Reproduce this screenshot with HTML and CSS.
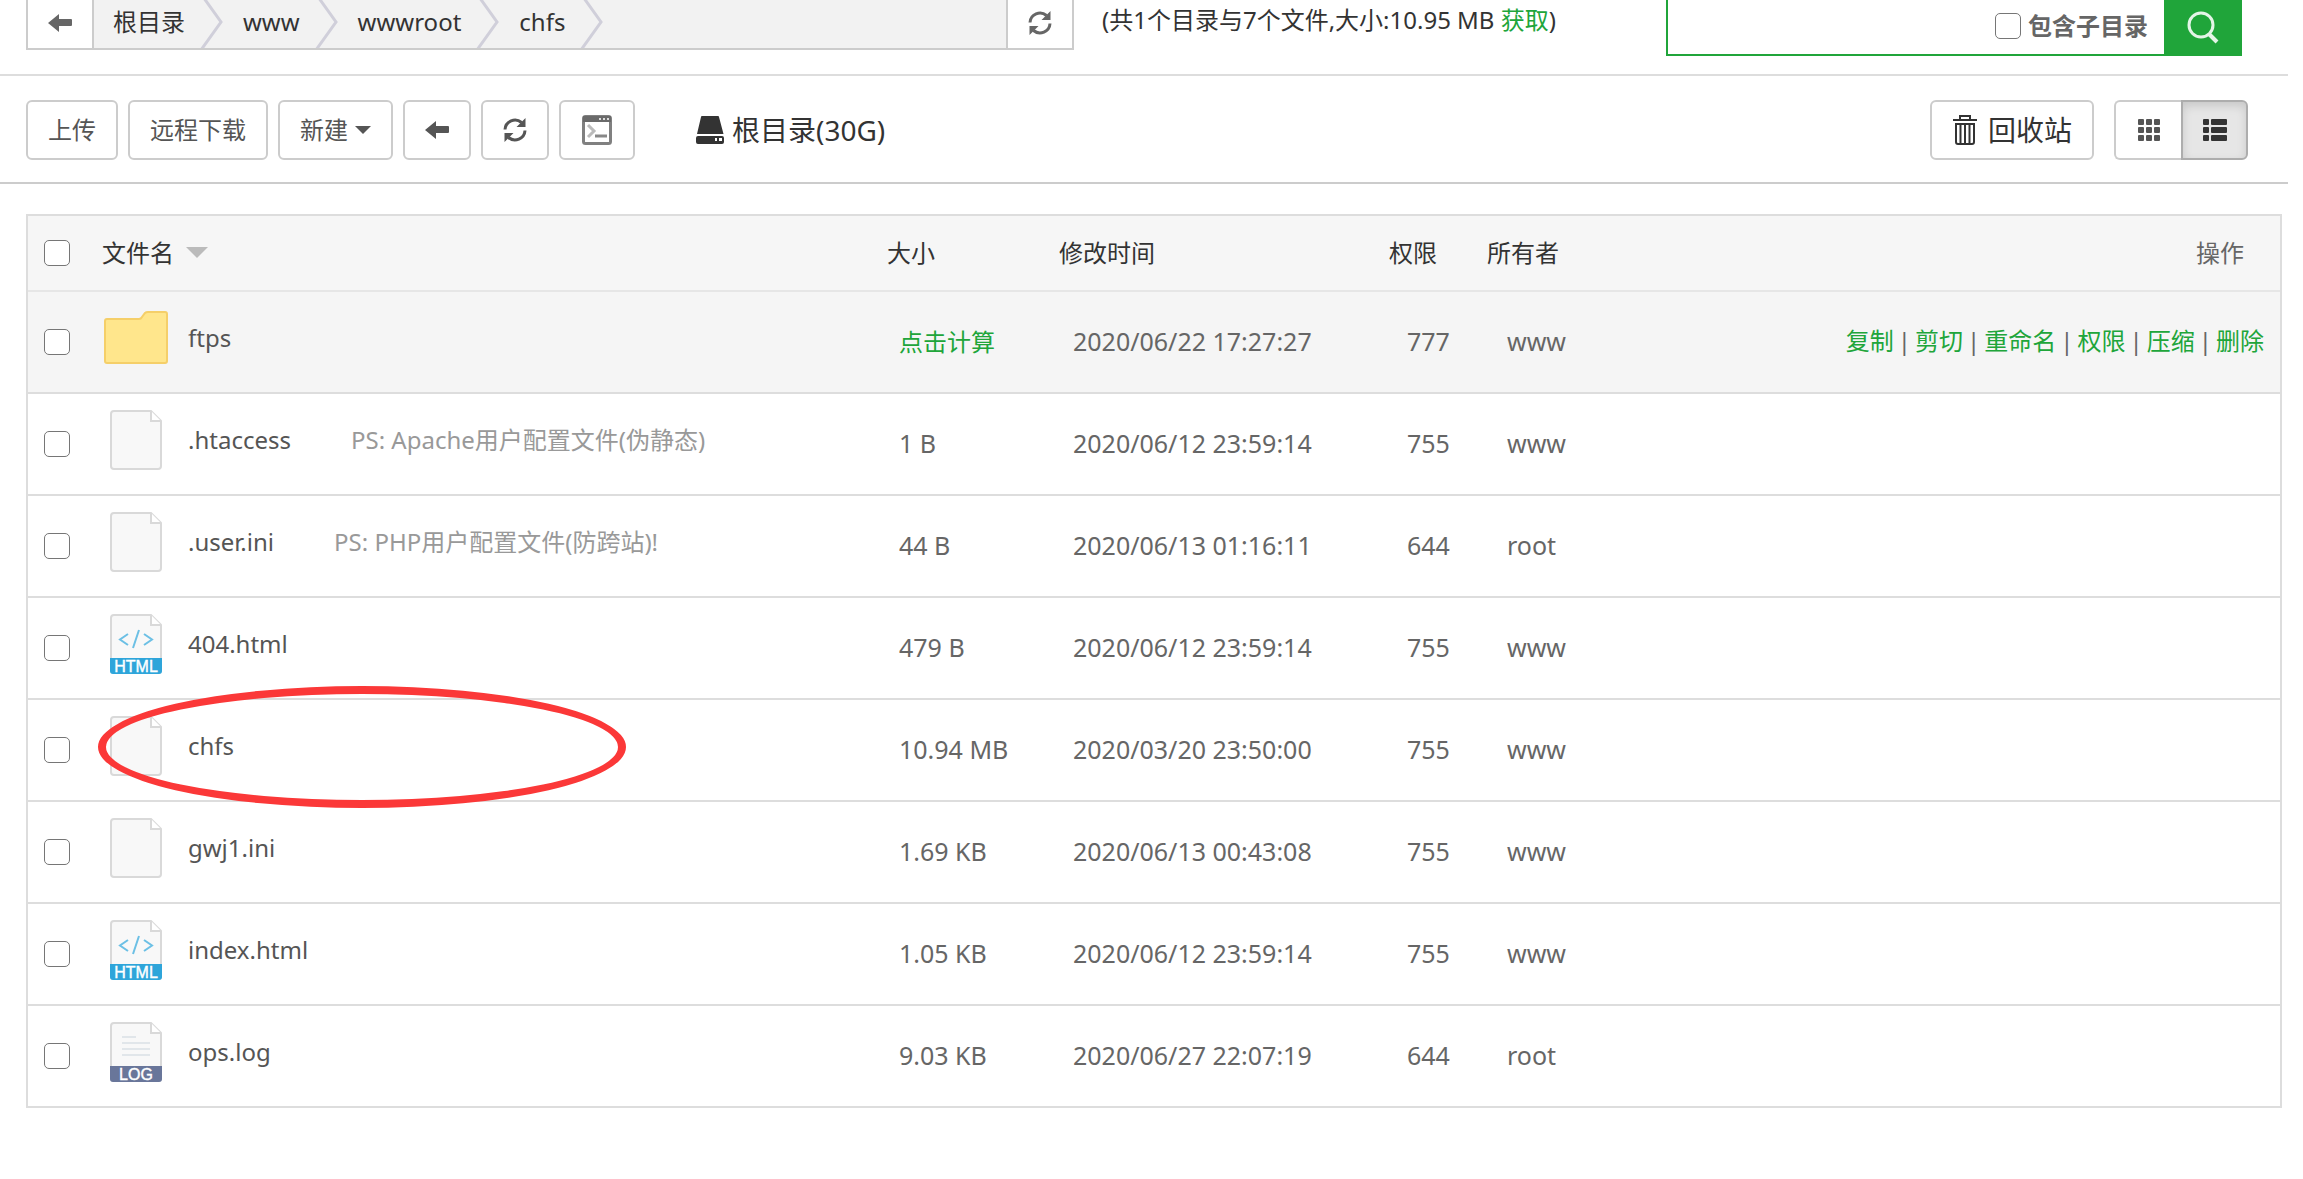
FILE: index.html
```html
<!DOCTYPE html>
<html lang="zh-CN">
<head>
<meta charset="utf-8">
<title>文件管理</title>
<link rel="stylesheet" href="styles.css">
</head>
<body>
<svg class="defs" aria-hidden="true">
  <symbol id="arrow" viewBox="0 0 24 24"><path d="M0 12 11 3V8H23q1 0 1 1v5q0 1-1 1H11v6z" fill="currentColor"/></symbol>
  <symbol id="refresh" viewBox="0 0 24 24"><path d="M2 11.500A10 10 0 0 1 18.500 4.500M22 12.500A10 10 0 0 1 5.500 19.500" fill="none" stroke="currentColor" stroke-width="3"/><path d="M22.500 0V9H13.500zM1.500 24V15h9z" fill="currentColor"/></symbol>
  <symbol id="chevron" viewBox="0 0 24 48"><path d="M1-6 21 22 1 50" fill="none" stroke="#d0cfda" stroke-width="3"/></symbol>
  <symbol id="doc" viewBox="0 0 52 60"><path d="M4 1H41L51 11V56q0 3-3 3H4q-3 0-3-3V4q0-3 3-3z" fill="#f8f8f8" stroke="#d9d9d9" stroke-width="2"/><path d="M41 1V11H51" fill="#fff" stroke="#d9d9d9" stroke-width="2"/></symbol>
</svg>
<div class="page">
  <header class="top">
    <nav class="path">
      <button class="path-btn" aria-label="返回"><svg class="ico"><use href="#arrow"/></svg></button>
      <div class="crumbs">
        <a href="#">根目录</a><svg class="chev"><use href="#chevron"/></svg>
        <a href="#">www</a><svg class="chev"><use href="#chevron"/></svg>
        <a href="#">wwwroot</a><svg class="chev"><use href="#chevron"/></svg>
        <a href="#">chfs</a><svg class="chev"><use href="#chevron"/></svg>
      </div>
      <button class="path-btn" aria-label="刷新"><svg class="ico"><use href="#refresh"/></svg></button>
    </nav>
    <p class="info">(共1个目录与7个文件,大小:10.95 MB <a href="#">获取</a>)</p>
    <form class="search">
      <input class="search-text" type="text" aria-label="搜索">
      <label class="sub"><input type="checkbox" class="check">包含子目录</label>
      <button class="search-btn" type="button" aria-label="搜索"><svg width="34" height="34" viewBox="0 0 34 34" fill="none" stroke="#e4f5e7" stroke-width="3"><circle cx="15" cy="15" r="12"/><path d="M23 24 31 32" stroke-width="4"/></svg></button>
    </form>
  </header>
  <div class="tools">
    <button class="btn">上传</button>
    <button class="btn">远程下载</button>
    <button class="btn">新建<span class="caret"></span></button>
    <button class="btn" aria-label="返回"><svg class="ico"><use href="#arrow"/></svg></button>
    <button class="btn" aria-label="刷新"><svg class="ico"><use href="#refresh"/></svg></button>
    <button class="btn" aria-label="终端"><svg width="32" height="32" viewBox="0 0 32 32"><rect x="2.500" y="2.500" width="27" height="27" rx="2" fill="#fff" stroke="#808080" stroke-width="3"/><path d="M2 2H30V8H2z" fill="#6a6a6a"/><path d="M18 5h2m2 0h2m2 0h2" stroke="#ddd" stroke-width="2"/><path d="M7 11 13 17 7 23" fill="none" stroke="#bbb" stroke-width="3"/><path d="M14 22H26" stroke="#888" stroke-width="3"/></svg></button>
    <span class="disk"><svg width="28" height="30" viewBox="0 0 28 30" fill="#333"><path d="M6 1H22q1 0 1 1L27.500 19H1L5 2q0-1 1-1z"/><path fill-rule="evenodd" d="M2 21H26q2 0 2 2v4q0 2-2 2H2q-2 0-2-2V23q0-2 2-2zM19 23v3h2V23zm4 0v3h3V23z"/></svg>根目录(30G)</span>
    <button class="btn trash"><svg width="26" height="32" viewBox="0 0 26 32" fill="none" stroke="#333" stroke-width="2"><path d="M1 6H25" stroke-width="2"/><path d="M8 5V2H18V5M4 10V28q0 2 2 2H20q2 0 2-2V10zM8.500 10V29M13 10V29M17.500 10V29"/></svg>回收站</button>
    <div class="group">
      <button class="btn" aria-label="图标"><svg width="22" height="22" viewBox="0 0 22 22" fill="#555"><g id="r"><rect width="6" height="6" rx="1"/><rect x="8" width="6" height="6" rx="1"/><rect x="16" width="6" height="6" rx="1"/></g><use href="#r" y="8"/><use href="#r" y="16"/></svg></button>
      <button class="btn on" aria-label="列表"><svg width="24" height="22" viewBox="0 0 24 22" fill="#333"><g id="l"><rect width="6" height="6" rx="1"/><rect x="8" width="16" height="6" rx="1"/></g><use href="#l" y="8"/><use href="#l" y="16"/></svg></button>
    </div>
  </div>
  <main class="files">
    <table>
      <colgroup><col class="c-check"><col class="c-name"><col class="c-size"><col class="c-date"><col class="c-perm"><col class="c-owner"><col></colgroup>
      <thead>
        <tr><th><input type="checkbox" class="check" aria-label="全选"></th><th>文件名<span class="sort"></span></th><th>大小</th><th>修改时间</th><th>权限</th><th>所有者</th><th class="op">操作</th></tr>
      </thead>
      <tbody>
        <tr class="hover"><td><input type="checkbox" class="check" aria-label="ftps"></td><td><div class="name"><svg class="ficon" viewBox="0 0 64 60"><path d="M3 11H35q2 0 3-2L41 5q1-1 3-1H61q2 0 2 2V53q0 2-2 2H3q-2 0-2-2V13q0-2 2-2z" fill="#ffe68c" stroke="#f5cf69" stroke-width="2"/></svg><a href="#">ftps</a></div></td><td><a class="link" href="#">点击计算</a></td><td>2020/06/22 17:27:27</td><td>777</td><td>www</td><td><div class="acts"><a href="#">复制</a><span>|</span><a href="#">剪切</a><span>|</span><a href="#">重命名</a><span>|</span><a href="#">权限</a><span>|</span><a href="#">压缩</a><span>|</span><a href="#">删除</a></div></td></tr>
        <tr><td><input type="checkbox" class="check" aria-label=".htaccess"></td><td><div class="name"><svg class="ficon" viewBox="-6 0 64 60"><use href="#doc" width="52" height="60"/></svg><a href="#">.htaccess</a><span class="ps">PS: Apache用户配置文件(伪静态)</span></div></td><td>1 B</td><td>2020/06/12 23:59:14</td><td>755</td><td>www</td><td></td></tr>
        <tr><td><input type="checkbox" class="check" aria-label=".user.ini"></td><td><div class="name"><svg class="ficon" viewBox="-6 0 64 60"><use href="#doc" width="52" height="60"/></svg><a href="#">.user.ini</a><span class="ps">PS: PHP用户配置文件(防跨站)!</span></div></td><td>44 B</td><td>2020/06/13 01:16:11</td><td>644</td><td>root</td><td></td></tr>
        <tr><td><input type="checkbox" class="check" aria-label="404.html"></td><td><div class="name"><svg class="ficon" viewBox="-6 0 64 60"><use href="#doc" width="52" height="60"/><path d="M18 20 10 25.500 18 31M34 20 42 25.500 34 31M29 16 23 34" fill="none" stroke="#6cc0e5" stroke-width="2"/><path d="M0 44H52V57q0 3-3 3H3q-3 0-3-3z" fill="#2ea5da"/><text class="tag" x="26" y="58">HTML</text></svg><a href="#">404.html</a></div></td><td>479 B</td><td>2020/06/12 23:59:14</td><td>755</td><td>www</td><td></td></tr>
        <tr><td><input type="checkbox" class="check" aria-label="chfs"></td><td class="marked"><div class="name"><svg class="ficon" viewBox="-6 0 64 60"><use href="#doc" width="52" height="60"/></svg><a href="#">chfs</a></div><span class="ring"></span></td><td>10.94 MB</td><td>2020/03/20 23:50:00</td><td>755</td><td>www</td><td></td></tr>
        <tr><td><input type="checkbox" class="check" aria-label="gwj1.ini"></td><td><div class="name"><svg class="ficon" viewBox="-6 0 64 60"><use href="#doc" width="52" height="60"/></svg><a href="#">gwj1.ini</a></div></td><td>1.69 KB</td><td>2020/06/13 00:43:08</td><td>755</td><td>www</td><td></td></tr>
        <tr><td><input type="checkbox" class="check" aria-label="index.html"></td><td><div class="name"><svg class="ficon" viewBox="-6 0 64 60"><use href="#doc" width="52" height="60"/><path d="M18 20 10 25.500 18 31M34 20 42 25.500 34 31M29 16 23 34" fill="none" stroke="#6cc0e5" stroke-width="2"/><path d="M0 44H52V57q0 3-3 3H3q-3 0-3-3z" fill="#2ea5da"/><text class="tag" x="26" y="58">HTML</text></svg><a href="#">index.html</a></div></td><td>1.05 KB</td><td>2020/06/12 23:59:14</td><td>755</td><td>www</td><td></td></tr>
        <tr><td><input type="checkbox" class="check" aria-label="ops.log"></td><td><div class="name"><svg class="ficon" viewBox="-6 0 64 60"><use href="#doc" width="52" height="60"/><path d="M12 15H26M12 21H40M12 27H40M12 33H40" stroke="#e1e6ea" stroke-width="2"/><path d="M0 44H52V57q0 3-3 3H3q-3 0-3-3z" fill="#69769a"/><text class="tag" x="26" y="58">LOG</text></svg><a href="#">ops.log</a></div></td><td>9.03 KB</td><td>2020/06/27 22:07:19</td><td>644</td><td>root</td><td></td></tr>
      </tbody>
    </table>
  </main>
</div>
</body>
</html>
```

FILE: styles.css
```css
* { box-sizing: border-box; }
body {
  margin: 0;
  background: #fff;
  color: #666;
  font: 24px/34px "Noto Sans", "Noto Sans CJK SC", sans-serif;
}
button, input { font: inherit; color: inherit; margin: 0; }
button { cursor: pointer; }
a { color: inherit; text-decoration: none; }
svg { display: block; flex: none; }
.defs { position: absolute; width: 0; height: 0; }
.page { margin-right: 15px; }
.ico { width: 24px; height: 24px; }

.top {
  display: flex;
  align-items: flex-start;
  height: 76px;
  padding: 0 46px 0 26px;
  border-bottom: 2px solid #ddd;
}
.path {
  display: flex;
  flex: 0 1 1048px;
  height: 50px;
  border: 2px solid #ccc;
  border-top: 0;
}
.path-btn {
  display: flex;
  align-items: center;
  justify-content: center;
  width: 64px;
  padding: 0 0 2px;
  border: 0;
  background: #fff;
  color: #666;
}
.crumbs {
  display: flex;
  flex: 1;
  overflow: hidden;
  background: #f2f2f2;
  border: solid #ccc;
  border-width: 0 2px;
  color: #333;
  line-height: 44px;
}
.crumbs a { padding: 0 15px 0 19px; }
.chev { width: 24px; height: 48px; }
.info { margin: 3px 0 0 28px; color: #333; }
.info a, .link, .acts a { color: #20a53a; }
.search {
  display: flex;
  width: 576px;
  height: 56px;
  margin-left: auto;
  border: solid #20a53a;
  border-width: 0 0 2px 2px;
}
.search-text { flex: 1; min-width: 0; border: 0; background: none; padding: 0 12px; outline: 0; }
.sub { display: flex; align-items: center; gap: 7px; padding: 0 16px 2px 0; font-weight: 700; }
.search-btn {
  display: flex;
  align-items: center;
  justify-content: center;
  width: 78px;
  border: 0;
  padding: 0;
  background: #20a53a;
}
.check {
  appearance: none;
  display: block;
  width: 26px;
  height: 26px;
  border: 1px solid #767676;
  border-radius: 5px;
  background: #fff;
}

.tools {
  display: flex;
  align-items: center;
  gap: 10px;
  padding: 24px 40px 22px 26px;
  border-bottom: 2px solid #ccc;
}
.btn {
  display: flex;
  align-items: center;
  justify-content: center;
  height: 60px;
  padding: 0 20px;
  border: 2px solid #ccc;
  border-radius: 6px;
  background: #fff;
  color: #555;
}
.caret {
  margin-left: 7px;
  border: 8px solid transparent;
  border-top-color: #555;
  border-bottom: 0;
}
.disk { display: flex; align-items: center; gap: 8px; margin-left: 51px; color: #333; font-size: 28px; }
.trash { margin-left: auto; gap: 10px; color: #333; font-size: 28px; }
.group { display: flex; margin-left: 10px; }
.group .btn { width: 67px; border-radius: 6px 0 0 6px; border-right: 0; }
.group .btn.on {
  border: 2px solid #adadad;
  border-radius: 0 6px 6px 0;
  background: #e6e6e6;
  box-shadow: inset 0 4px 10px #0002;
}

.files { padding: 30px 6px 0 26px; }
table {
  width: 100%;
  table-layout: fixed;
  border-collapse: separate;
  border-spacing: 0;
  border: 2px solid #ddd;
  border-bottom: 0;
}
.c-check { width: 70px; }
.c-name { width: 785px; }
.c-size { width: 172px; }
.c-date { width: 330px; }
.c-perm { width: 98px; }
.c-owner { width: 120px; }
th, td { text-align: left; white-space: nowrap; padding: 0 0 0 4px; }
th {
  height: 76px;
  background: #f6f6f6;
  border-bottom: 2px solid #e6e6e6;
  color: #333;
  font-weight: 400;
}
td { height: 102px; border-bottom: 2px solid #ddd; font-size: 25px; }
td:nth-child(n+3) { padding: 0 0 2px 16px; }
td:nth-child(4) { padding-left: 18px; }
td:nth-child(5) { padding-left: 22px; }
td:nth-child(6) { padding-left: 24px; }
th:first-child, td:first-child { padding-left: 16px; }
th.op { text-align: right; padding-right: 36px; color: #666; }
.acts { display: flex; justify-content: flex-end; gap: 4px; padding-right: 16px; font-size: 24px; }
.link { font-size: 24px; }
.hover td { background: #f5f5f5; }
.sort {
  display: inline-block;
  margin-left: 12px;
  vertical-align: 4px;
  border: 11px solid transparent;
  border-top-color: #bbb;
  border-bottom: 0;
}
.name { display: flex; align-items: center; padding-bottom: 8px; color: #555; font-size: 24px; }
.ficon { width: 64px; height: 60px; margin: 0 20px 0 2px; }
.tag { fill: #fff; font: 16px "Liberation Sans", sans-serif; text-anchor: middle; stroke: #fff; stroke-width: 0.4px; }
.ps { margin-left: 60px; color: #999; }
.marked { position: relative; }
.ring {
  position: absolute;
  left: 0;
  top: -14px;
  width: 528px;
  height: 122px;
  border: 8px solid #fb3838;
  border-radius: 50%;
}
```
